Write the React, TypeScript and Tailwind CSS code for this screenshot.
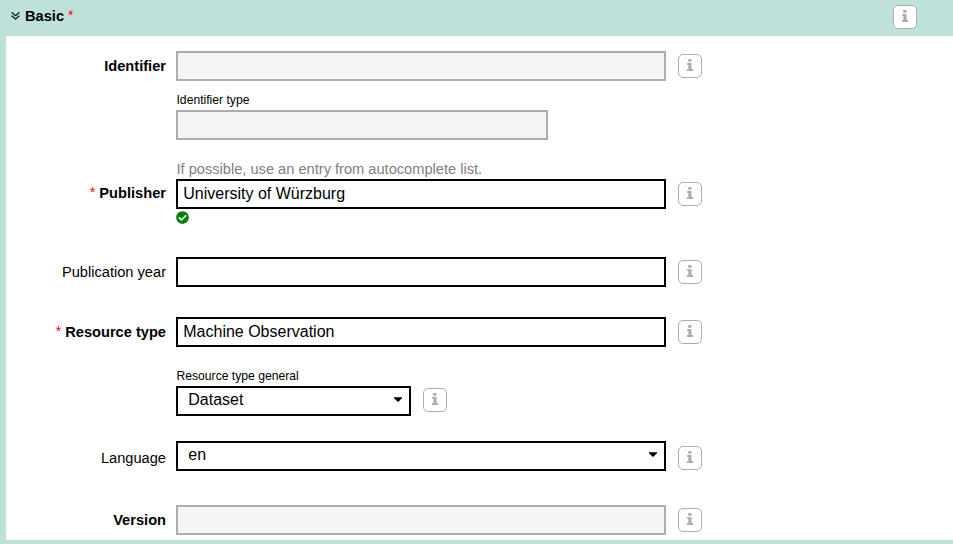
import type { ReactNode } from "react";
import { FaCaretDown, FaCheckCircle } from "react-icons/fa";

function InfoButton({ className = "" }: { className?: string }) {
  return (
    <button
      aria-label="Info"
      className={`flex h-6 w-6 shrink-0 items-start justify-center rounded-[5px] border border-[#adadad] bg-white pt-1 text-[#adadad] ${className}`}
    >
      <svg width="6" height="12" viewBox="0 0 6 12" fill="currentColor">
        <rect x="1.2" y="0" width="3.3" height="2.8" rx="0.3" />
        <path d="M0.2 4H4.5V10H6V12H0V10H1.4V6H0.2Z" />
      </svg>
    </button>
  );
}

function Star() {
  return <span className="relative -top-[1.5px] text-[14px] font-normal text-[#ff0000]">*</span>;
}

interface RowProps {
  label: string;
  bold?: boolean;
  required?: boolean;
  className?: string;
  labelClass?: string;
  infoClass?: string;
  children: ReactNode;
}

function Row({
  label,
  bold = false,
  required = false,
  className = "",
  labelClass = "",
  infoClass = "",
  children,
}: RowProps) {
  return (
    <div className={`flex h-[30px] items-center ${className}`}>
      <label
        className={`w-[160px] shrink-0 text-right text-[14.64px] leading-[18px] whitespace-nowrap ${bold ? "font-bold" : ""} ${labelClass}`}
      >
        {required && <Star />} {label}
      </label>
      <div className="ml-2.5 w-[490px]">{children}</div>
      <InfoButton className={`ml-3 ${infoClass}`} />
    </div>
  );
}

function Field({ value = "", disabled = false }: { value?: string; disabled?: boolean }) {
  return (
    <div
      className={`h-[30px] border-2 px-[5.25px] text-[16px] leading-[25px] ${disabled ? "border-[#adadad] bg-[#f4f4f4]" : "border-black bg-white"}`}
    >
      {value}
    </div>
  );
}

function Select({ value }: { value: string }) {
  return (
    <div className="flex h-[30px] justify-between border-2 border-black bg-white pr-1 pl-[10.25px] text-[16px] leading-[23px]">
      <span>{value}</span>
      <FaCaretDown className="mt-[4px] h-[14px] w-[14px]" />
    </div>
  );
}

export default function App() {
  return (
    <main className="h-[544px] w-[953px] overflow-hidden bg-[#bee1d9] font-['Liberation_Sans',Arial,sans-serif] text-black">
      <header className="flex h-9 items-start justify-between pt-[5px] pr-9 pl-[11px]">
        <h2 className="mt-[2px] flex items-center text-[14.64px] leading-[18px] font-bold">
          <svg width="9" height="8" viewBox="0 0 9 8" fill="none" stroke="black" strokeWidth="1.15" className="mr-[5px]">
            <path d="M0.6 0.4L4.5 3.7L8.4 0.4M0.6 3.8L4.5 7.1L8.4 3.8" />
          </svg>
          Basic&nbsp;<Star />
        </h2>
        <InfoButton />
      </header>
      <section className="ml-1.5 h-[504px] bg-white pt-[15px]">
        <Row label="Identifier" bold>
          <Field disabled />
        </Row>
        <div className="mt-[11px] ml-[170px] w-[372px]">
          <div className="h-[18px] pl-[0.5px] text-[12.15px] leading-[16px]">Identifier type</div>
          <Field disabled />
        </div>
        <p className="mt-5 ml-[170px] h-[19px] pl-[0.5px] text-[14.64px] leading-[19px] text-[#808080]">
          If possible, use an entry from autocomplete list.
        </p>
        <Row label="Publisher" bold required labelClass="-mt-0.5">
          <Field value="University of Würzburg" />
        </Row>
        <FaCheckCircle className="mt-0.5 ml-[170px] h-[13px] w-[13px] text-[#008000]" />
        <Row label="Publication year" className="mt-[33px]">
          <Field />
        </Row>
        <Row label="Resource type" bold required className="mt-[30px]">
          <Field value="Machine Observation" />
        </Row>
        <div className="mt-[21px] ml-[170px] h-[18px] pl-[0.5px] text-[12.15px] leading-[16px]">Resource type general</div>
        <div className="ml-[170px] flex h-[30px] items-start">
          <div className="w-[235px]">
            <Select value="Dataset" />
          </div>
          <InfoButton className="mt-0.5 ml-3" />
        </div>
        <Row label="Language" className="mt-[25px]" labelClass="mt-1" infoClass="mt-1">
          <Select value="en" />
        </Row>
        <Row label="Version" bold className="mt-[34px]">
          <Field disabled />
        </Row>
      </section>
    </main>
  );
}
